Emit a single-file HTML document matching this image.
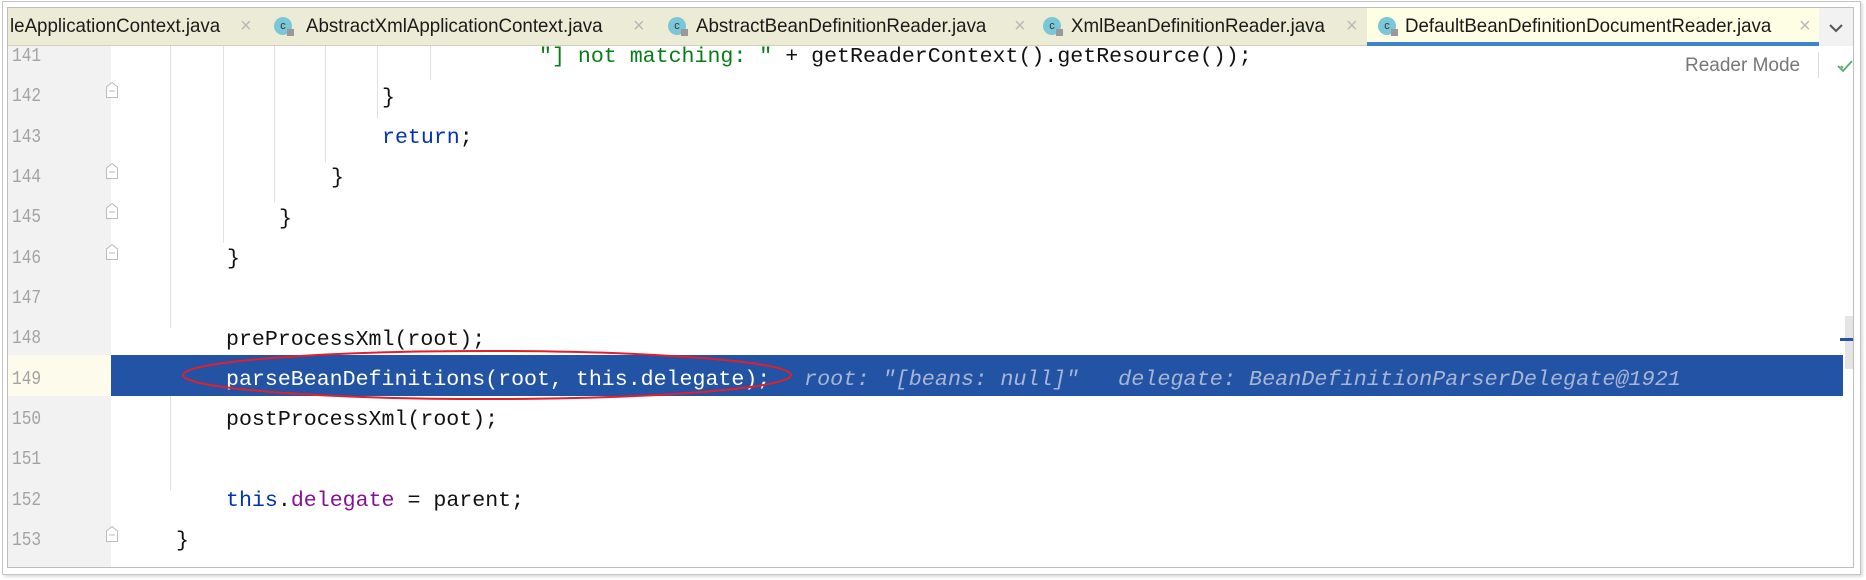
<!DOCTYPE html>
<html><head><meta charset="utf-8"><style>
*{margin:0;padding:0;box-sizing:border-box}
body{width:1866px;height:580px;background:#fff;position:relative;overflow:hidden;font-family:"Liberation Sans",sans-serif}
.abs{position:absolute}
#outer{left:2px;top:1px;width:1859px;height:574px;border:1px solid #c4c4c4;box-shadow:2px 2px 3px #ddd}
#inner{left:7px;top:7px;width:1847px;height:561px;border:1px solid #bdbdbd;background:#fff;overflow:hidden}
#tabs{left:0;top:0;width:1845px;height:38px;background:#ececd6;border-bottom:1px solid #d0d0c0}
.tab{position:absolute;top:0;height:38px;font-size:19.5px;color:#1a1a1a;line-height:36px;white-space:nowrap;transform:scaleX(.96);transform-origin:left}
.x{position:absolute;top:0;color:#b8b8b8;font-size:20px;line-height:36px}
.ic{position:absolute;top:9px;width:18px;height:18px;border-radius:50%;background:#7ac7d8;font-size:11px;color:#333;text-align:center;line-height:18px}
.ic::after{content:"";position:absolute;right:-2px;bottom:-1px;width:7px;height:7px;background:#999}
#gutter{left:0;top:38px;width:103px;height:530px;background:#f2f2f2}
.ln{position:absolute;left:4px;width:40px;font-family:"Liberation Mono",monospace;font-size:19px;color:#a3a3a3;transform:scaleX(.85);transform-origin:left}
.code{position:absolute;font-family:"Liberation Mono",monospace;font-size:21.6px;color:#111;white-space:pre;transform:scaleX(1.0);transform-origin:left}
.g{position:absolute;width:1px;background:#e2e2e2}
.fold{position:absolute;left:97px;width:14px;height:18px}
</style></head><body>
<div id="outer" class="abs"></div>
<div id="inner" class="abs">
 <div id="tabs" class="abs">
  <div class="tab" style="left:2px">leApplicationContext.java</div><div class="x" style="left:232px">×</div>
  <div class="ic" style="left:266px">c</div><div class="tab" style="left:298px">AbstractXmlApplicationContext.java</div><div class="x" style="left:625px">×</div>
  <div class="ic" style="left:660px">c</div><div class="tab" style="left:688px">AbstractBeanDefinitionReader.java</div><div class="x" style="left:1006px">×</div>
  <div class="ic" style="left:1035px">c</div><div class="tab" style="left:1063px">XmlBeanDefinitionReader.java</div><div class="x" style="left:1338px">×</div>
  <div class="abs" style="left:1359px;top:0;width:452px;height:38px;background:#fefee4;border-bottom:4px solid #4083c9"></div>
  <div class="ic" style="left:1370px">c</div><div class="tab" style="left:1397px">DefaultBeanDefinitionDocumentReader.java</div><div class="x" style="left:1791px">×</div>
  <div class="abs" style="left:1811px;top:0;width:34px;height:38px;background:#f2f2f2"><svg width="34" height="38"><path d="M11 17 L17 23 L23 17" stroke="#555" stroke-width="2" fill="none"/></svg></div>
 </div>
 <div id="gutter" class="abs"></div>
 <div class="abs" style="left:0;top:347px;width:103px;height:41px;background:#fcfbec"></div>
 <div class="abs" style="left:103px;top:347px;width:1732px;height:41px;background:#2253a5"></div>
 <div class="abs" style="left:1837px;top:308px;width:9px;height:53px;background:#ddd;opacity:.8"></div>
 <div class="abs" style="left:1832px;top:330px;width:14px;height:3px;background:#2253a5"></div>
 <div class="abs" style="left:1677px;top:47px;font-size:19px;color:#777">Reader Mode</div>
 <div class="abs" style="left:1810px;top:44px;width:1px;height:26px;background:#ddd"></div>
 <svg class="abs" style="left:1828px;top:50px" width="18" height="16"><path d="M2 8 L7 13 L16 3 M5 8 L7 10" stroke="#5aaa6a" stroke-width="1.8" fill="none"/></svg>
 <div class="g" style="left:162px;top:38px;height:282px"></div>
 <div class="g" style="left:215px;top:38px;height:197px"></div>
 <div class="g" style="left:266px;top:38px;height:156px"></div>
 <div class="g" style="left:317px;top:38px;height:116px"></div>
 <div class="g" style="left:369px;top:38px;height:72px"></div>
 <div class="g" style="left:422px;top:38px;height:34px"></div>
 <div class="g" style="left:162px;top:388px;height:94px"></div>
 <div class="ln" style="top:37px">141</div>
 <div class="ln" style="top:77px">142</div>
 <div class="ln" style="top:118px">143</div>
 <div class="ln" style="top:158px">144</div>
 <div class="ln" style="top:198px">145</div>
 <div class="ln" style="top:239px">146</div>
 <div class="ln" style="top:279px">147</div>
 <div class="ln" style="top:319px">148</div>
 <div class="ln" style="top:360px">149</div>
 <div class="ln" style="top:400px">150</div>
 <div class="ln" style="top:440px">151</div>
 <div class="ln" style="top:481px">152</div>
 <div class="ln" style="top:521px">153</div>
 <svg class="fold" style="top:73px"><path d="M1.5 16.5 V6 L7 1.5 L12.5 6 V16.5 Z M4 10 H10" stroke="#bbb" fill="#fff"/></svg>
 <svg class="fold" style="top:154px"><path d="M1.5 16.5 V6 L7 1.5 L12.5 6 V16.5 Z M4 10 H10" stroke="#bbb" fill="#fff"/></svg>
 <svg class="fold" style="top:194px"><path d="M1.5 16.5 V6 L7 1.5 L12.5 6 V16.5 Z M4 10 H10" stroke="#bbb" fill="#fff"/></svg>
 <svg class="fold" style="top:235px"><path d="M1.5 16.5 V6 L7 1.5 L12.5 6 V16.5 Z M4 10 H10" stroke="#bbb" fill="#fff"/></svg>
 <svg class="fold" style="top:517px"><path d="M1.5 16.5 V6 L7 1.5 L12.5 6 V16.5 Z M4 10 H10" stroke="#bbb" fill="#fff"/></svg>
 <div class="code" style="left:531px;top:37px;color:#067d17">"] not matching: " <span style="color:#111">+ getReaderContext().getResource());</span></div>
 <div class="code" style="left:374px;top:78px">}</div>
 <div class="code" style="left:374px;top:118px;color:#0033b3">return<span style="color:#111">;</span></div>
 <div class="code" style="left:323px;top:158px">}</div>
 <div class="code" style="left:271px;top:199px">}</div>
 <div class="code" style="left:219px;top:239px">}</div>
 <div class="code" style="left:218px;top:320px">preProcessXml(root);</div>
 <div class="code" style="left:218px;top:360px;color:#fff">parseBeanDefinitions(root, this.delegate);</div>
 <div class="code" style="left:796px;top:360px;color:#a9b6d3;font-style:italic;font-size:21.6px;transform:scaleX(1.01)">root: "[beans: null]"   delegate: BeanDefinitionParserDelegate@1921</div>
 <div class="code" style="left:218px;top:400px">postProcessXml(root);</div>
 <div class="code" style="left:218px;top:481px"><span style="color:#0033b3">this</span>.<span style="color:#871094">delegate</span> = parent;</div>
 <div class="code" style="left:168px;top:521px">}</div>
 <svg class="abs" style="left:170px;top:340px" width="620" height="75"><ellipse cx="309" cy="27" rx="304" ry="24" stroke="#e0202a" stroke-width="2" fill="none"/></svg>
</div>
</body></html>
